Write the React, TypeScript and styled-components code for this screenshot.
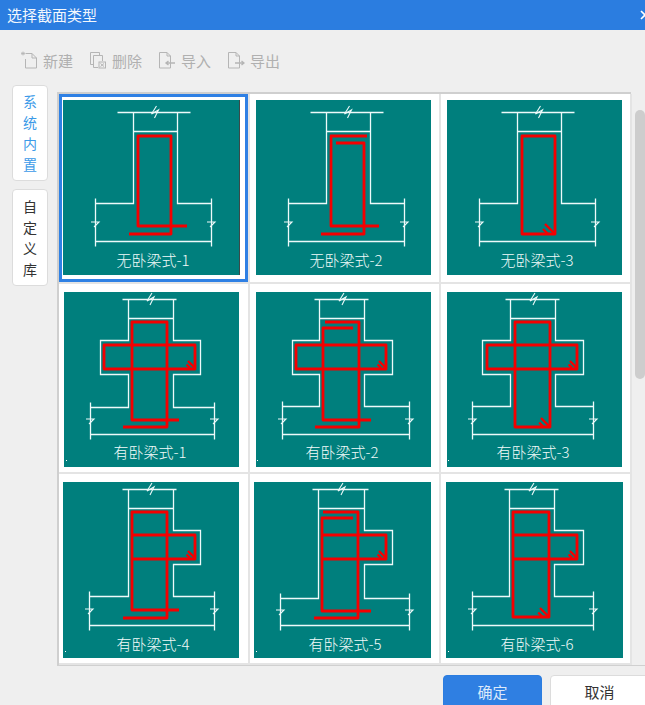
import { ReactNode } from "react";
import styled, { createGlobalStyle } from "styled-components";

const GlobalStyle = createGlobalStyle`
  html, body {
    margin: 0;
    padding: 0;
    background: #efefef;
    font-family: "Noto Sans CJK SC", "Liberation Sans", sans-serif;
  }
`;

const Dialog = styled.div`
  position: relative;
  width: 645px;
  height: 705px;
  overflow: hidden;
  background: #efefef;
`;

const TitleBar = styled.header`
  height: 30px;
  padding-left: 7px;
  display: flex;
  align-items: center;
  justify-content: space-between;
  background: #2b7de0;
  color: #f2f7fd;
  font-size: 15px;
  line-height: 28px;
`;

const CloseIcon = styled.svg`
  margin-right: -5px;
  flex: none;
`;

const Toolbar = styled.div`
  height: 62px;
  box-sizing: border-box;
  padding: 0 0 2px 20px;
  display: flex;
  align-items: center;
`;

const ToolItem = styled.div<{ $width: number }>`
  width: ${(p) => p.$width}px;
  display: flex;
  align-items: center;
  gap: 5px;
  color: #b0b0b0;
  font-size: 15px;
`;

const Body = styled.div`
  display: flex;
  align-items: flex-start;
  padding-left: 12px;
`;

const SideTabs = styled.nav`
  width: 36px;
  margin-right: 9px;
  margin-top: -7px;
  display: flex;
  flex-direction: column;
  gap: 8px;
`;

const SideTab = styled.div<{ $active?: boolean; $height: number }>`
  height: ${(p) => p.$height}px;
  box-sizing: border-box;
  display: flex;
  flex-direction: column;
  align-items: center;
  justify-content: center;
  border: 1px solid #dcdcdc;
  border-radius: 4px;
  background: #fff;
  color: ${(p) => (p.$active ? "#3c9ae8" : "#333")};
  font-size: 14px;
  line-height: 21px;
`;

const GridPanel = styled.div`
  width: 574px;
  height: 573px;
  box-sizing: border-box;
  border-top: 2px solid #cfcfcf;
  border-left: 2px solid #cfcfcf;
  display: grid;
  grid-template-columns: repeat(3, 191px);
  grid-template-rows: 190px 190px 191px;
  background: #fff;
`;

const Cell = styled.div<{ $selected?: boolean; $pad: number; $top: number }>`
  box-sizing: border-box;
  padding: ${(p) => p.$top}px 0 0 ${(p) => p.$pad}px;
  border-right: 2px solid #e4e4e4;
  border-bottom: 2px solid #e4e4e4;
  ${(p) => p.$selected && "box-shadow: inset 0 0 0 3px #2f80e4;"}
`;

const Plate = styled.svg<{ $edge?: boolean }>`
  display: block;
  background: #007f7d;
  ${(p) => p.$edge && "box-shadow: 1px 0 0 #3a4a4a;"}
`;

const ScrollThumb = styled.div`
  position: absolute;
  left: 635px;
  top: 110px;
  width: 10px;
  height: 269px;
  border-radius: 5px;
  background: #cdcdcd;
`;

const Footer = styled.footer`
  position: absolute;
  left: 57px;
  right: 0;
  top: 665px;
  height: 40px;
  padding: 9px 0 0 386px;
  box-sizing: border-box;
  display: flex;
  gap: 8px;
  border-top: 1px solid #d0d0d0;
`;

const FooterButton = styled.button<{ $primary?: boolean }>`
  width: 99px;
  height: 40px;
  flex: none;
  padding: 0 0 8px;
  border: 1px solid ${(p) => (p.$primary ? "#2b7de0" : "#dcdcdc")};
  border-radius: 4px;
  background: ${(p) => (p.$primary ? "#2f7fe2" : "#fff")};
  color: ${(p) => (p.$primary ? "#dce9fa" : "#333")};
  font-family: inherit;
  font-size: 15px;
`;

const LINE = "#eefafa";
const RED = "#f40000";

type Shape = {
  topY: number;
  crossY: number;
  top: [number, number];
  walls: [number, number];
  flange: [number, number];
  flangeY: number;
  dimY: number;
  breakY: number;
  wing?: { left?: number; right: number };
  bars: string[];
  hooks: [number, number, number][];
  label: string;
  labelX: number;
  labelY: number;
  dot?: [number, number];
};

// break marks on the cut lines of the section
const BreakTop = ({ x, y }: { x: number; y: number }) => (
  <path d={`M${x + 2} ${y - 6}L${x - 3} ${y + 2}L${x + 4} ${y - 2}L${x} ${y + 6}`} stroke={LINE} fill="none" strokeWidth="1.1" />
);

const BreakSide = ({ x, y }: { x: number; y: number }) => (
  <path d={`M${x - 4} ${y - 1}H${x + 4}L${x - 1} ${y + 4}`} stroke={LINE} fill="none" strokeWidth="1.1" />
);

const Hook = ({ x, y, size }: { x: number; y: number; size: number }) => (
  <path
    d={`M${x} ${y}l${-10 * size} ${-10 * size}M${x - 7 * size} ${y}l${-5 * size} ${-5 * size}`}
    stroke={RED}
    fill="none"
    strokeWidth="2.4"
  />
);

const Section = ({ w, h, s, edge }: { w: number; h: number; s: Shape; edge?: boolean }) => {
  const [wl, wr] = s.walls;
  const [fl, fr] = s.flange;
  let outline = `M${wl} ${s.topY}`;
  if (s.wing?.left !== undefined) outline += `V48H${s.wing.left}V82H${wl}`;
  outline += `V${s.flangeY}H${fl}M${wr} ${s.topY}`;
  if (s.wing) outline += `V48H${s.wing.right}V82H${wr}`;
  outline += `V${s.flangeY}H${fr}`;

  return (
    <Plate $edge={edge} width={w} height={h} viewBox={`0 0 ${w} ${h}`}>
      <g stroke={LINE} strokeWidth="1.3" fill="none" transform="translate(.5 .5)">
        <path d={`M${s.top[0]} ${s.topY}H${s.top[1]}M${wl} ${s.crossY}H${wr}`} />
        <path d={outline} />
        <path d={`M${fl} ${s.flangeY - 5}V${s.dimY + 5}M${fr} ${s.flangeY - 5}V${s.dimY + 5}M${fl} ${s.dimY}H${fr}`} />
      </g>
      <BreakTop x={(s.top[0] + s.top[1]) / 2 + 1} y={s.topY} />
      <BreakSide x={fl} y={s.breakY} />
      <BreakSide x={fr} y={s.breakY} />
      {s.bars.map((d) => (
        <path key={d} d={d} stroke={RED} strokeWidth="2.8" fill="none" strokeLinejoin="round" />
      ))}
      {s.hooks.map(([x, y, size]) => (
        <Hook key={`${x}-${y}`} x={x} y={y} size={size} />
      ))}
      {s.dot && <rect x={s.dot[0]} y={s.dot[1]} width="1" height="1" fill="#fff" />}
      <text
        x={s.labelX}
        y={s.labelY}
        fill="#f2fbfa"
        fontSize="15"
        fontWeight="300"
        textAnchor="middle"
        fontFamily='"Noto Sans CJK SC", sans-serif'
      >
        {s.label}
      </text>
    </Plate>
  );
};

const plain = {
  topY: 12,
  crossY: 31,
  top: [54, 127] as [number, number],
  walls: [70, 114] as [number, number],
  flange: [32, 148] as [number, number],
  flangeY: 103,
  dimY: 141,
  breakY: 123,
  labelX: 90,
  labelY: 166,
};

const ribbed = { topY: 7, crossY: 26, labelY: 166, breakY: 128, dimY: 142 };
const sideRibbed = { topY: 7, crossY: 26, labelY: 168, breakY: 128, dimY: 143 };

type Item = { w: number; h: number; pad: number; top: number; selected?: boolean; s: Shape };

const sections: Item[] = [
  {
    w: 176, h: 175, pad: 4, top: 6, selected: true,
    s: { ...plain, bars: ["M124 126H75V36H108V134H66"], hooks: [], label: "无卧梁式-1" },
  },
  {
    w: 175, h: 175, pad: 6, top: 6,
    s: { ...plain, bars: ["M111 36H75V126H123", "M80 43H108V134H65"], hooks: [], label: "无卧梁式-2" },
  },
  {
    w: 175, h: 175, pad: 6, top: 6,
    s: { ...plain, bars: ["M75 36H108V134H75Z"], hooks: [[108, 134, 1]], label: "无卧梁式-3" },
  },
  {
    w: 175, h: 175, pad: 5, top: 8,
    s: {
      ...ribbed, top: [58, 112], walls: [64, 109], flange: [26, 150], flangeY: 115, wing: { left: 36, right: 136 },
      bars: ["M115 128H68V30H103V135H59", "M40 53H131V77H40Z"], hooks: [[131, 76, 0.7]], label: "有卧梁式-1", labelX: 86, dot: [2, 168],
    },
  },
  {
    w: 175, h: 175, pad: 6, top: 8,
    s: {
      ...ribbed, top: [58, 112], walls: [63, 108], flange: [26, 153], flangeY: 114, wing: { left: 36, right: 136 },
      bars: ["M69 30H103V135H59", "M97 36H67V128H115", "M40 53H130V77H40Z"], hooks: [[130, 76, 0.7]], label: "有卧梁式-2", labelX: 86, dot: [1, 168],
    },
  },
  {
    w: 175, h: 175, pad: 6, top: 8,
    s: {
      ...ribbed, top: [58, 112], walls: [63, 108], flange: [25, 146], flangeY: 114, wing: { left: 35, right: 136 },
      bars: ["M68 30H103V135H68Z", "M40 53H130V77H40Z"], hooks: [[103, 135, 0.9], [130, 76, 0.7]], label: "有卧梁式-3", labelX: 86, dot: [1, 168],
    },
  },
  {
    w: 176, h: 176, pad: 4, top: 8,
    s: {
      ...sideRibbed, top: [59, 113], walls: [65, 110], flange: [26, 151], flangeY: 114, wing: { right: 137 },
      bars: ["M116 128H69V30H104V136H60", "M69 53H132V77H69"], hooks: [[132, 76, 0.7]], label: "有卧梁式-4", labelX: 90, dot: [2, 169],
    },
  },
  {
    w: 177, h: 176, pad: 4, top: 8,
    s: {
      ...sideRibbed, top: [58, 114], walls: [64, 110], flange: [26, 155], flangeY: 116, breakY: 129, wing: { right: 138 },
      bars: ["M69 30H104V136H60", "M99 36H68V129H117", "M68 53H132V77H68"], hooks: [[132, 76, 0.7]], label: "有卧梁式-5", labelX: 91, dot: [2, 169],
    },
  },
  {
    w: 177, h: 176, pad: 5, top: 8,
    s: {
      ...sideRibbed, top: [58, 112], walls: [63, 108], flange: [26, 147], flangeY: 114, wing: { right: 137 },
      bars: ["M67 30H103V135H67Z", "M67 53H131V77H67"], hooks: [[103, 135, 0.9], [131, 76, 0.7]], label: "有卧梁式-6", labelX: 91, dot: [2, 169],
    },
  },
];

const ICON = "#b5b5b5";

const ToolIcon = ({ children }: { children: ReactNode }) => (
  <svg width="18" height="18" viewBox="0 0 18 18" fill="none" stroke={ICON} strokeWidth="1">
    {children}
  </svg>
);

const Doc = () => <path d="M1.5 1.5H9L12.5 5V17H1.5Z M9 1.5V5H12.5" />;

const App = () => (
  <Dialog>
    <GlobalStyle />
    <TitleBar>
      选择截面类型
      <CloseIcon width="10" height="10" viewBox="0 0 10 10" stroke="#fff" strokeWidth="1.6">
        <path d="M1 1L9 9M9 1L1 9" />
      </CloseIcon>
    </TitleBar>
    <Toolbar>
      <ToolItem $width={69}>
        <ToolIcon>
          <path d="M5.5 2.5H12L16.5 7V17H5.5V8 M12 2.5V7H16.5" />
          <path d="M1 2.5H5M3 .5V4.5M1.5 1L4.5 4M4.5 1L1.5 4" strokeWidth=".8" />
        </ToolIcon>
        新建
      </ToolItem>
      <ToolItem $width={69}>
        <ToolIcon>
          <path d="M4 13.5H1.5V1.5H10.5V4" />
          <path d="M4.5 4.5H13.5V10M9 16.5H4.5V4.5" />
          <rect x="10" y="11" width="6.5" height="6" />
          <path d="M11.5 12.5L15 15.5M15 12.5L11.5 15.5" />
        </ToolIcon>
        删除
      </ToolItem>
      <ToolItem $width={69}>
        <ToolIcon>
          <Doc />
          <path d="M17 12H8.5M10.5 10L8 12L10.5 14" strokeWidth="1.4" />
        </ToolIcon>
        导入
      </ToolItem>
      <ToolItem $width={69}>
        <ToolIcon>
          <Doc />
          <path d="M8 12H16.5M14.5 10L17 12L14.5 14" strokeWidth="1.4" />
        </ToolIcon>
        导出
      </ToolItem>
    </Toolbar>
    <Body>
      <SideTabs>
        <SideTab $active $height={96}>
          <span>系</span>
          <span>统</span>
          <span>内</span>
          <span>置</span>
        </SideTab>
        <SideTab $height={97}>
          <span>自</span>
          <span>定</span>
          <span>义</span>
          <span>库</span>
        </SideTab>
      </SideTabs>
      <GridPanel>
        {sections.map((c) => (
          <Cell key={c.s.label} $selected={c.selected} $pad={c.pad} $top={c.top}>
            <Section w={c.w} h={c.h} s={c.s} edge={c.selected} />
          </Cell>
        ))}
      </GridPanel>
    </Body>
    <ScrollThumb />
    <Footer>
      <FooterButton $primary>确定</FooterButton>
      <FooterButton>取消</FooterButton>
    </Footer>
  </Dialog>
);

export default App;
